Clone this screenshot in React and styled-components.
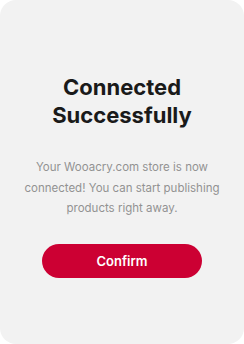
import React from "react";
import styled, { createGlobalStyle } from "styled-components";

const Global = createGlobalStyle`
  html, body { margin: 0; padding: 0; background: #ffffff; }
  body { font-family: Inter, "Noto Sans", Arial, sans-serif; }
`;

const Card = styled.div`
  width: 244px;
  height: 344px;
  box-sizing: border-box;
  background: #f2f2f2;
  border-radius: 16px;
  display: flex;
  flex-direction: column;
  align-items: center;
  padding: 73px 16px 0;
`;

const Title = styled.h1`
  margin: 0;
  font-family: Inter, "Noto Sans", Arial, sans-serif;
  font-weight: 700;
  font-size: 22px;
  line-height: 28px;
  color: #1a1a1a;
  text-align: center;
`;

const Message = styled.p`
  margin: 28px 0 0;
  font-family: Inter, "Noto Sans", Arial, sans-serif;
  font-size: 11.5px;
  line-height: 20.5px;
  color: #929292;
  text-align: center;
`;

const Button = styled.button`
  margin-top: 25px;
  width: 160px;
  height: 34px;
  border: none;
  border-radius: 17px;
  background: #cc0033;
  color: #ffffff;
  font-family: Inter, "Noto Sans", Arial, sans-serif;
  font-size: 13px;
  font-weight: 600;
  cursor: pointer;
`;

export default function App() {
  return (
    <>
      <Global />
      <Card>
        <Title>
          Connected
          <br />
          Successfully
        </Title>
        <Message>
          Your Wooacry.com store is now
          <br />
          connected! You can start publishing
          <br />
          products right away.
        </Message>
        <Button>Confirm</Button>
      </Card>
    </>
  );
}
